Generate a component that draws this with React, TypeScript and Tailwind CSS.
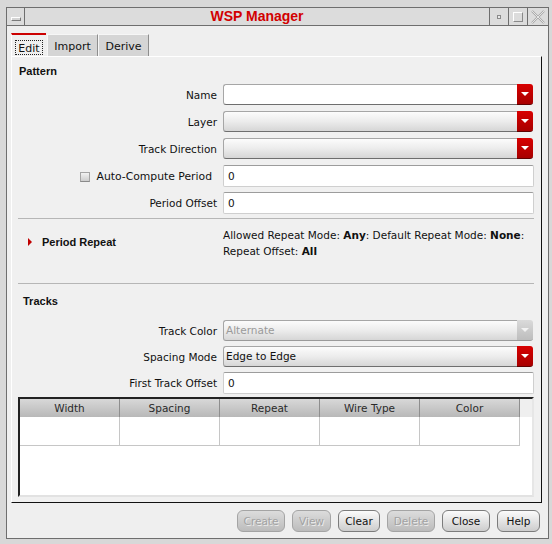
import React from "react";

const F = "font-['DejaVu_Sans',sans-serif]";

function Arrow({ disabled }: { disabled?: boolean }) {
  return (
    <div
      className={
        "w-[16px] h-full rounded-r-[3px] flex items-center justify-center border-b " +
        (disabled
          ? "bg-linear-to-b from-[#dadada] to-[#bdbdbd] border-b-[#9a9a9a]"
          : "bg-linear-to-b from-[#d80000] to-[#a80000] border-b-[#600000]")
      }
    >
      <span
        className={
          "w-0 h-0 border-l-[4px] border-r-[4px] border-t-[4px] border-l-transparent border-r-transparent " +
          (disabled ? "border-t-[#f2f2f2]" : "border-t-white")
        }
      />
    </div>
  );
}

function Combo({ value, editable, disabled }: { value?: string; editable?: boolean; disabled?: boolean }) {
  return (
    <div className="flex h-[21px] w-[310px]">
      <div
        className={
          "flex-1 h-full rounded-l-[3px] border-t border-l border-b border-t-[#a6a6a6] border-l-[#a6a6a6] border-b-[#6e6e6e] pl-[2px] pt-[1px] flex items-center text-[10.5px] " +
          (editable ? "bg-white" : "bg-linear-to-b from-[#fcfcfc] via-[#ececec] to-[#d6d6d6]") +
          (disabled ? " text-[#9a9a9a] border-b-[#9a9a9a]" : " text-[#111]")
        }
      >
        {value}
      </div>
      <Arrow disabled={disabled} />
    </div>
  );
}

function TextIn({ value }: { value: string }) {
  return (
    <div className="h-[22px] w-[311px] bg-white border border-[#cfcfcf] border-t-[#9c9c9c] rounded-[2px] pl-[4px] pt-[2px] flex items-center text-[10.5px] text-[#111]">
      {value}
    </div>
  );
}

function Row({ label, children, h }: { label: React.ReactNode; children: React.ReactNode; h: string }) {
  return (
    <div className={"flex items-start " + h}>
      <div className="w-[205px] h-[21px] pt-[3px] flex items-center justify-end text-[10.5px] text-[#111]">{label}</div>
      <div className="ml-[6px]">{children}</div>
    </div>
  );
}

function Btn({ label, w, disabled }: { label: string; w: string; disabled?: boolean }) {
  return (
    <div
      className={
        "h-[22px] rounded-[6px] border pt-[2px] flex items-center justify-center text-[10.5px] " +
        w +
        (disabled
          ? " border-[#a4a4a4] bg-linear-to-b from-[#dcdcdc] to-[#bcbcbc] text-[#a2a2a2] [text-shadow:1px_1px_0_#ececec]"
          : " border-[#7c7c7c] bg-linear-to-b from-[#fbfbfb] to-[#cdcdcd] text-[#111]")
      }
    >
      {label}
    </div>
  );
}

const cols = ["Width", "Spacing", "Repeat", "Wire Type", "Color"];

export default function App() {
  return (
    <div className={"w-[552px] h-[544px] bg-[#d8d8d8] pt-[7px] pl-[6px] pr-[3px] pb-[5px] " + F}>
      <div className="h-full flex flex-col border border-[#6e6e6e] bg-[#efefef]">
        {/* title bar */}
        <div className="h-[18px] flex bg-[#dcdcdc] border-b border-[#6e6e6e]">
          <div className="w-[18px] border-r border-[#6e6e6e] flex items-center justify-center">
            <div className="w-[10px] h-[4px] mt-[4px] border border-t-white border-l-white border-b-[#7a7a7a] border-r-[#7a7a7a] bg-[#d4d4d4]" />
          </div>
          <div className="flex-1 flex items-center justify-center font-['Liberation_Sans',sans-serif] font-bold text-[14px] text-[#d20000]">
            WSP Manager
          </div>
          <div className="w-[19px] border-l border-[#6e6e6e] flex items-center justify-center">
            <div className="w-[4px] h-[4px] border border-[#8a8a8a] bg-[#e8e8e8]" />
          </div>
          <div className="w-[19px] border-l border-[#6e6e6e] flex items-center justify-center">
            <div className="w-[10px] h-[10px] border border-[#8a8a8a] border-t-white border-l-white" />
          </div>
          <div className="w-[21px] border-l border-[#6e6e6e] flex items-center justify-center">
            <svg width="16" height="16" viewBox="0 0 16 16">
              <path d="M2 2 L14 14 M14 2 L2 14" stroke="#a8a8a8" strokeWidth="2.2" />
              <path d="M2 2 L14 14 M14 2 L2 14" stroke="#f4f4f4" strokeWidth="0.8" />
            </svg>
          </div>
        </div>

        {/* content */}
        <div className="flex-1 flex flex-col pt-[7px] pl-[4px]">
          {/* tabs */}
          <div className="flex items-end h-[23px]">
            <div className="w-[35px] h-[23px] border-t-2 border-[#cc0000] border-l border-l-white bg-[#efefef] flex items-center justify-center pt-[3px]">
              <div className="border border-dotted border-[#222] px-[2px] h-[15px] pt-[1px] leading-[13px] text-[11px] text-[#111]">Edit</div>
            </div>
            <div className="ml-[1px] w-[51px] h-[22px] pt-[3px] bg-[#d5d5d5] border-t border-l border-t-[#f6f6f6] border-l-[#f6f6f6] border-r border-r-[#8e8e8e] flex items-center justify-center text-[11px] text-[#111]">
              Import
            </div>
            <div className="w-[51px] h-[22px] pt-[3px] bg-[#d5d5d5] border-t border-l border-t-[#f6f6f6] border-l-[#f6f6f6] border-r border-r-[#8e8e8e] flex items-center justify-center text-[11px] text-[#111]">
              Derive
            </div>
          </div>

          {/* panel */}
          <div className="w-[531px] h-[447px] border border-t-white border-l-white border-r-[#111] border-b-[#111] bg-[#f0f0f0] flex flex-col">
            <div className="mt-[6px] h-[16px] leading-[16px] pl-[7px] font-['Liberation_Sans',sans-serif] font-bold text-[11px] text-[#111]">
              Pattern
            </div>
            <div className="mt-[5px] flex flex-col">
              <Row label="Name" h="h-[27px]">
                <Combo editable />
              </Row>
              <Row label="Layer" h="h-[27px]">
                <Combo />
              </Row>
              <Row label="Track Direction" h="h-[27px]">
                <Combo />
              </Row>
              <Row
                h="h-[27px]"
                label={
                  <span className="flex items-center pr-[5px]">
                    <span className="w-[10px] h-[10px] border border-[#a4a4a4] border-b-[#8a8a8a] bg-linear-to-b from-[#f2f2f2] to-[#cdcdcd] mr-[7px]" />
                    <span className="text-[10.8px]">Auto-Compute Period</span>
                  </span>
                }
              >
                <TextIn value="0" />
              </Row>
              <Row label="Period Offset" h="h-[26px]">
                <TextIn value="0" />
              </Row>
            </div>
            <div className="ml-[6px] w-[516px] border-t border-[#b6b6b6]" />

            {/* Period Repeat */}
            <div className="h-[64px] flex">
              <div className="w-[205px] pt-[15px] pl-[16px] flex items-start">
                <div className="h-[16px] flex items-center">
                  <span className="w-0 h-0 border-t-[4px] border-b-[4px] border-l-[4px] border-t-transparent border-b-transparent border-l-[#c00000]" />
                  <span className="ml-[10px] font-['Liberation_Sans',sans-serif] font-bold text-[11px] text-[#111]">
                    Period Repeat
                  </span>
                </div>
              </div>
              <div className="ml-[6px] pt-[8px] text-[10.5px] leading-[16px] text-[#111] whitespace-nowrap">
                Allowed Repeat Mode: <b>Any</b>: Default Repeat Mode: <b>None</b>:
                <br />
                Repeat Offset: <b>All</b>
              </div>
            </div>
            <div className="ml-[6px] w-[516px] border-t border-[#b6b6b6]" />

            <div className="mt-[9px] h-[16px] leading-[16px] pl-[11px] font-['Liberation_Sans',sans-serif] font-bold text-[11px] text-[#111]">
              Tracks
            </div>
            <div className="mt-[11px] flex flex-col">
              <Row label="Track Color" h="h-[26px]">
                <Combo value="Alternate" disabled />
              </Row>
              <Row label="Spacing Mode" h="h-[26px]">
                <Combo value="Edge to Edge" />
              </Row>
              <Row label="First Track Offset" h="h-[25px]">
                <TextIn value="0" />
              </Row>
            </div>

            {/* table */}
            <div className="ml-[6px] w-[516px] h-[100px] border-t-2 border-l-2 border-t-[#222] border-l-[#222] border-r-2 border-b-2 border-r-[#e6e6e6] border-b-[#e2e2e2] bg-white flex flex-col">
              <div className="flex h-[18px] bg-[#efefef]">
                {cols.map((c) => (
                  <div
                    key={c}
                    className="w-[100px] h-full pt-[2px] border-r border-[#8e8e8e] bg-linear-to-b from-[#d8d8d8] to-[#b8b8b8] flex items-center justify-center text-[10.5px] text-[#2a2a2a]"
                  >
                    {c}
                  </div>
                ))}
              </div>
              <div className="flex h-[29px]">
                {cols.map((c) => (
                  <div key={c} className="w-[100px] h-full border-r border-b border-[#c6c6c6]" />
                ))}
              </div>
            </div>
          </div>

          {/* buttons */}
          <div className="mt-[7px] pr-[8px] flex justify-end gap-[7px]">
            <Btn label="Create" w="w-[48px]" disabled />
            <Btn label="View" w="w-[39px]" disabled />
            <Btn label="Clear" w="w-[42px]" />
            <Btn label="Delete" w="w-[48px]" disabled />
            <Btn label="Close" w="w-[48px]" />
            <Btn label="Help" w="w-[43px]" />
          </div>
        </div>
      </div>
    </div>
  );
}
